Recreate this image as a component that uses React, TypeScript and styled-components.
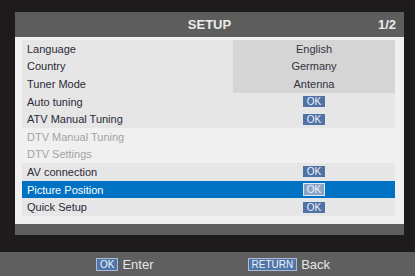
import React from "react";
import styled, { createGlobalStyle } from "styled-components";

const Global = createGlobalStyle`
  html, body { margin: 0; padding: 0; background: #1d1b1c; }
  body { font-family: "Liberation Sans", Arial, sans-serif; width: 415px; height: 276px; overflow: hidden; }
`;

const Screen = styled.div`
  width: 415px;
  height: 276px;
  display: flex;
  flex-direction: column;
  background: #1d1b1c;
`;

const Stage = styled.div`
  height: 253px;
  padding: 12px 11px 0 15px;
  box-sizing: border-box;
`;

const Panel = styled.div`
  width: 389px;
  display: flex;
  flex-direction: column;
`;

const TitleBar = styled.div`
  height: 25px;
  background: #5d5d5d;
  color: #ececec;
  font-weight: bold;
  font-size: 13px;
  display: grid;
  grid-template-columns: 1fr auto 1fr;
  align-items: center;
  padding: 0 8px;
`;

const Title = styled.div`
  grid-column: 2;
  text-align: center;
`;

const Page = styled.div`
  grid-column: 3;
  text-align: right;
`;

const Content = styled.div`
  height: 187px;
  box-sizing: border-box;
  background: #f0f0f0;
  padding: 3px 9px 0 7px;
  display: flex;
  flex-direction: column;
`;

const Group = styled.div<{ $shaded?: boolean }>`
  background: ${(p) => (p.$shaded ? "#e6e6e7" : "transparent")};
`;

const Row = styled.div<{ $selected?: boolean; $disabled?: boolean }>`
  height: 17.6px;
  display: grid;
  grid-template-columns: 1fr 162px;
  font-size: 11px;
  background: ${(p) => (p.$selected ? "#0072c4" : "transparent")};
  color: ${(p) => (p.$selected ? "#ffffff" : p.$disabled ? "#a3a3a3" : "#2a2a36")};
`;

const Label = styled.div`
  display: flex;
  align-items: center;
  padding-left: 5px;
`;

const Value = styled.div<{ $boxed?: boolean }>`
  display: flex;
  align-items: center;
  justify-content: center;
  background: ${(p) => (p.$boxed ? "#d5d5d6" : "transparent")};
  color: #33333d;
`;

const OkBadge = styled.span<{ $active?: boolean }>`
  display: inline-flex;
  align-items: center;
  justify-content: center;
  box-sizing: border-box;
  width: 22px;
  height: ${(p) => (p.$active ? "13px" : "11px")};
  font-size: 10px;
  background: ${(p) => (p.$active ? "#8aa3c6" : "#5172a5")};
  border: ${(p) => (p.$active ? "1px solid #dfe7f2" : "none")};
  color: #eef2f8;
`;

const BottomBar = styled.div`
  height: 11px;
  background: #5f5f5f;
`;

const Footer = styled.div`
  height: 23px;
  background: #5f5f5f;
  display: flex;
  align-items: center;
  padding: 1px 0 0 96px;
  gap: 94px;
  color: #e6e6e6;
  font-size: 13px;
`;

const Hint = styled.div`
  display: flex;
  align-items: center;
  gap: 4px;
`;

const KeyBadge = styled.span`
  display: inline-flex;
  align-items: center;
  justify-content: center;
  box-sizing: border-box;
  height: 13px;
  padding: 0 3px;
  font-size: 10px;
  background: #5275a9;
  border: 1px solid #aabbd5;
  color: #eef2f8;
`;

type Item = { label: string; value?: string; ok?: boolean; disabled?: boolean; selected?: boolean };

const group1: Item[] = [
  { label: "Language", value: "English" },
  { label: "Country", value: "Germany" },
  { label: "Tuner Mode", value: "Antenna" },
  { label: "Auto tuning", ok: true },
  { label: "ATV Manual Tuning", ok: true },
];
const group2: Item[] = [
  { label: "DTV Manual Tuning", disabled: true },
  { label: "DTV Settings", disabled: true },
];
const group3: Item[] = [
  { label: "AV connection", ok: true },
  { label: "Picture Position", ok: true, selected: true },
  { label: "Quick Setup", ok: true },
];

const renderRow = (it: Item) => (
  <Row key={it.label} $selected={it.selected} $disabled={it.disabled}>
    <Label>{it.label}</Label>
    <Value $boxed={!!it.value}>
      {it.value}
      {it.ok && <OkBadge $active={it.selected}>OK</OkBadge>}
    </Value>
  </Row>
);

export default function App() {
  return (
    <>
      <Global />
      <Screen>
        <Stage>
          <Panel>
            <TitleBar>
              <Title>SETUP</Title>
              <Page>1/2</Page>
            </TitleBar>
            <Content>
              <Group $shaded>{group1.map(renderRow)}</Group>
              <Group>{group2.map(renderRow)}</Group>
              <Group $shaded>{group3.map(renderRow)}</Group>
            </Content>
            <BottomBar />
          </Panel>
        </Stage>
        <Footer>
          <Hint>
            <KeyBadge>OK</KeyBadge>
            Enter
          </Hint>
          <Hint>
            <KeyBadge>RETURN</KeyBadge>
            Back
          </Hint>
        </Footer>
      </Screen>
    </>
  );
}
